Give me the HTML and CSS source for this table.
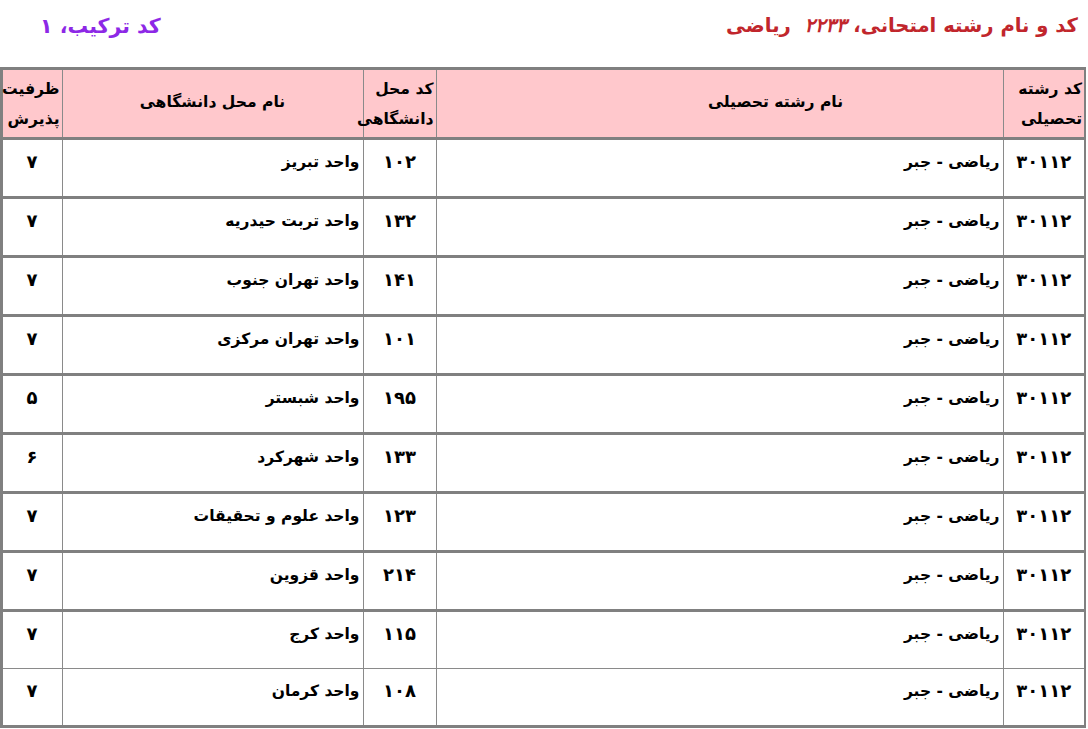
FILE: index.html
```html
<!DOCTYPE html>
<html lang="fa" dir="rtl">
<head>
<meta charset="utf-8">
<link rel="stylesheet" href="styles.css">
</head>
<body>
<div class="top">
  <div class="title">کد و نام رشته امتحانی، <span class="num">۲۲۳۳</span>&nbsp; ریاضی</div>
  <div class="combo">کد ترکیب، ۱</div>
</div>
<table class="grid">
  <colgroup>
    <col class="c-code"><col class="c-field"><col class="c-ucode"><col class="c-uname"><col class="c-cap">
  </colgroup>
  <thead>
    <tr>
      <th class="side">کد رشته<br>تحصیلی</th>
      <th class="mid field">نام رشته تحصیلی</th>
      <th class="side">کد محل<br>دانشگاهی</th>
      <th class="mid">نام محل دانشگاهی</th>
      <th class="side">ظرفیت<br>پذیرش</th>
    </tr>
  </thead>
  <tbody>
    <tr><td class="n">۳۰۱۱۲</td><td class="t">ریاضی - جبر</td><td class="n">۱۰۲</td><td class="t">واحد تبریز</td><td class="n">۷</td></tr>
    <tr><td class="n">۳۰۱۱۲</td><td class="t">ریاضی - جبر</td><td class="n">۱۳۲</td><td class="t">واحد تربت حیدریه</td><td class="n">۷</td></tr>
    <tr><td class="n">۳۰۱۱۲</td><td class="t">ریاضی - جبر</td><td class="n">۱۴۱</td><td class="t">واحد تهران جنوب</td><td class="n">۷</td></tr>
    <tr><td class="n">۳۰۱۱۲</td><td class="t">ریاضی - جبر</td><td class="n">۱۰۱</td><td class="t">واحد تهران مرکزی</td><td class="n">۷</td></tr>
    <tr><td class="n">۳۰۱۱۲</td><td class="t">ریاضی - جبر</td><td class="n">۱۹۵</td><td class="t">واحد شبستر</td><td class="n">۵</td></tr>
    <tr><td class="n">۳۰۱۱۲</td><td class="t">ریاضی - جبر</td><td class="n">۱۳۳</td><td class="t">واحد شهرکرد</td><td class="n">۶</td></tr>
    <tr><td class="n">۳۰۱۱۲</td><td class="t">ریاضی - جبر</td><td class="n">۱۲۳</td><td class="t">واحد علوم و تحقیقات</td><td class="n">۷</td></tr>
    <tr><td class="n">۳۰۱۱۲</td><td class="t">ریاضی - جبر</td><td class="n">۲۱۴</td><td class="t">واحد قزوین</td><td class="n">۷</td></tr>
    <tr class="thin"><td class="n">۳۰۱۱۲</td><td class="t">ریاضی - جبر</td><td class="n">۱۱۵</td><td class="t">واحد کرج</td><td class="n">۷</td></tr>
    <tr><td class="n">۳۰۱۱۲</td><td class="t">ریاضی - جبر</td><td class="n">۱۰۸</td><td class="t">واحد کرمان</td><td class="n">۷</td></tr>
  </tbody>
</table>
</body>
</html>
```

FILE: styles.css
```css
html, body {
  margin: 0;
  padding: 0;
  background: #ffffff;
}
body {
  font-family: "DejaVu Sans", "Noto Sans", sans-serif;
  color: #000;
  direction: rtl;
}
.top {
  height: 67px;
  display: flex;
  justify-content: space-between;
  align-items: flex-start;
  padding: 11px 10px 0 40px;
  box-sizing: border-box;
}
.title {
  color: #c1262c;
  font-weight: bold;
  font-size: 19.6px;
  line-height: 30px;
}
.title .num {
  font-style: italic;
}
.combo {
  color: #8d28e6;
  font-weight: bold;
  font-size: 20.5px;
  line-height: 30px;
}
.grid {
  border-collapse: collapse;
  table-layout: fixed;
  width: 1084px;
  margin: 0 2px;
}
.c-code { width: 82px; }
.c-field { width: 567px; }
.c-ucode { width: 73px; }
.c-uname { width: 301px; }
.c-cap { width: 61px; }
.grid thead th {
  background: #ffc8cc;
  height: 63px;
  border: 1px solid #8a8a8a;
  border-top: 3px solid #808080;
  border-bottom: 3px solid #808080;
  font-size: 15.6px;
  font-weight: bold;
  line-height: 30px;
  padding: 0 2px;
}
.grid th.side { text-align: right; }
.grid th.mid { text-align: center; padding-bottom: 4px; }
.grid th.field { padding-left: 114px; }
.grid td {
  height: 48px;
  border-left: 1px solid #8a8a8a;
  border-right: 1px solid #8a8a8a;
  border-bottom: 3px solid #808080;
  vertical-align: top;
  padding: 8px 3px 0;
  font-weight: bold;
}
.grid tr.thin td { border-bottom: 1px solid #8a8a8a; }
.grid td.n {
  text-align: center;
  font-size: 18px;
  line-height: 28px;
}
.grid td.t {
  text-align: right;
  font-size: 15.5px;
  line-height: 28px;
}
.grid tr > :last-child { border-left: 3px solid #808080; }
.grid tr > :first-child { border-right: 2px solid #808080; }
```
